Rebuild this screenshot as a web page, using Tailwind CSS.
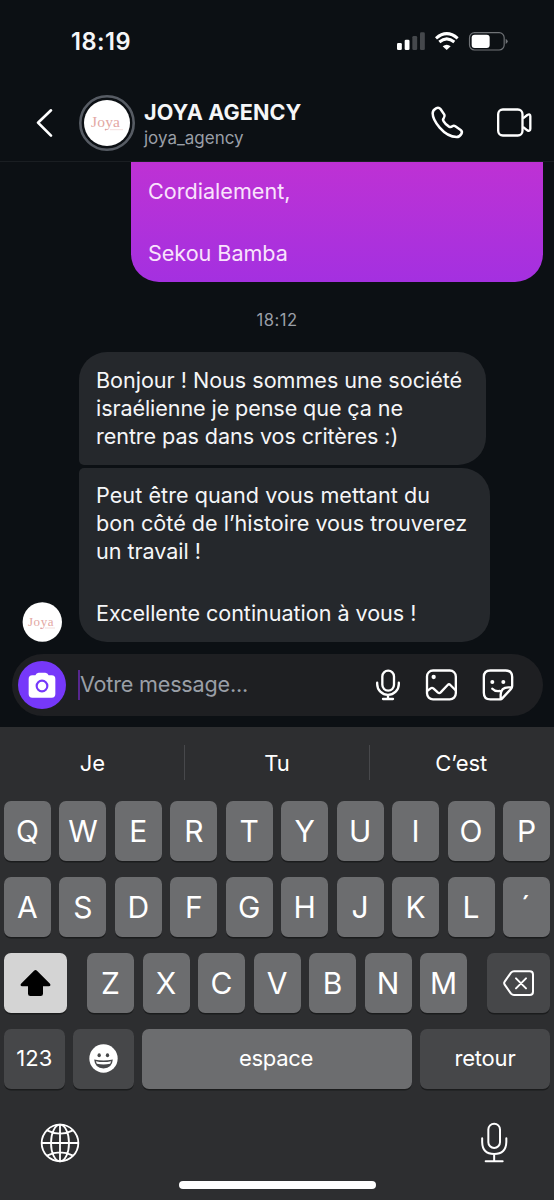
<!DOCTYPE html>
<html lang="fr">
<head>
<meta charset="utf-8">
<title>JOYA AGENCY</title>
<script src="https://cdn.jsdelivr.net/npm/@tailwindcss/browser@4"></script>
</head>
<body class="bg-[#0c1014]">
<div class="flex h-[1200px] w-[554px] flex-col overflow-hidden bg-[#0c1014] font-['Inter',sans-serif] text-[#f5f6f8]">

  <!-- Status bar -->
  <div class="flex h-[82px] shrink-0 items-center justify-between pl-[71px] pr-[43.7px]">
    <div class="pt-[2px] text-[23.6px] leading-7 font-semibold tracking-[0.5px] whitespace-nowrap">18:19</div>
    <svg class="h-[22px] w-[115px]" viewBox="355 90 345 66" fill="#fff">
      <rect x="361" y="129" width="14.500" height="21" rx="4"/><rect x="384" y="119" width="14.500" height="31" rx="4"/>
      <rect x="407" y="108" width="14.500" height="42" rx="4" fill="#45484c"/><rect x="430" y="97" width="14.500" height="53" rx="4" fill="#45484c"/>
      <path d="M478 115Q510 87 543 115" fill="none" stroke="#fff" stroke-width="9"/>
      <path d="M488 126Q510 107 533 126" fill="none" stroke="#fff" stroke-width="9"/>
      <path d="M498 139Q510 129 522 139L510 150Z"/>
      <rect x="578.500" y="98" width="104" height="52" rx="15" fill="none" stroke="#707377" stroke-width="3.500"/>
      <rect x="585" y="104" width="54" height="40" rx="9"/><path d="M687 116Q693 119 693 124Q693 129 687 132Z" fill="#707377"/>
    </svg>
  </div>

  <!-- Chat header -->
  <div class="flex h-[80px] shrink-0 items-center border-b border-[#1a1e22] pt-[2px] pl-[33px] pr-[20.500px]">
    <svg class="h-[34px] w-[22px]" viewBox="99 317 66 102" fill="none" stroke="#fff" stroke-width="8" stroke-linecap="round" stroke-linejoin="round"><path d="M153 330L114 367L153 406"/></svg>
    <svg class="ml-[24px] size-[56px]" viewBox="0 0 56 56">
      <circle cx="28" cy="28" r="26.700" fill="#0c1014" stroke="#575c64" stroke-width="2.600"/><circle cx="28" cy="28" r="23" fill="#fff"/>
      <text x="12" y="32" font-family="Liberation Serif, serif" font-size="15.500" textLength="29" fill="#e3a7a3">Joya</text>
      <path d="M31 34.700H44" stroke="#f3dfdd" stroke-width="1"/><circle cx="26.500" cy="34.700" r=".8" fill="#d99"/>
    </svg>
    <div class="ml-[9px] flex-1 pt-[4px] whitespace-nowrap">
      <div class="text-[21.6px] leading-[27px] font-bold tracking-[0.1px]">JOYA AGENCY</div>
      <div class="text-[17px] leading-[24px] text-[#9a9fa7]">joya_agency</div>
    </div>
    <svg class="size-[36.67px]" viewBox="455 312 110 110" fill="none" stroke="#fff" stroke-width="7.500" stroke-linejoin="round"><path d="M476 325C482 322 487 324 490 328L501 344C503 348 502 351 499 355C496 358 497 361 499 364C503 371 509 376 515 380C519 382 521 382 525 379C528 377 531 377 534 379L550 390C554 393 555 397 552 402C549 407 544 411 538 411C520 411 500 398 487 383C475 369 466 354 466 340C466 333 470 328 476 325Z"/></svg>
    <svg class="ml-[30px] h-[36.67px] w-[38.33px]" viewBox="655 312 115 110" fill="none" stroke="#fff" stroke-width="7" stroke-linejoin="round"><rect x="664.500" y="328.500" width="73" height="78" rx="14"/><path d="M739 355L752 345Q761 340 761 349V386Q761 395 752 391L739 381"/></svg>
  </div>

  <!-- Conversation -->
  <div class="flex h-[480px] shrink-0 flex-col text-[21.6px] leading-[28px] whitespace-nowrap">
    <div class="ml-[131px] h-[119.5px] w-[412px] rounded-b-[28px] bg-linear-to-b from-[#be31d4] to-[#a430e0] pt-[15px] pl-[17px] text-[#f9e3fc]">
      <p class="mb-[34px]">Cordialement,</p>
      <p class="tracking-[-0.05px]">Sekou Bamba</p>
    </div>
    <div class="mt-[27px] h-[22px] text-center text-[16.6px] leading-[22px] tracking-[0.5px] text-[#9a9fa7]">18:12</div>
    <div class="mt-[21.500px] ml-[79px] h-[112.500px] w-[407px] rounded-[28px] rounded-bl-[5px] bg-[#25282c] pt-[14px] pl-[17px]">
      <p class="tracking-[-0.03px]">Bonjour ! Nous sommes une société</p>
      <p class="tracking-[-0.1px]">israélienne je pense que ça ne</p>
      <p class="tracking-[-0.08px]">rentre pas dans vos critères :)</p>
    </div>
    <div class="mt-[3px] flex items-end">
      <svg class="ml-[22px] size-[40px]" viewBox="0 0 40 40">
        <circle cx="20.300" cy="20" r="19.700" fill="#fff"/>
        <text x="6" y="24" font-family="Liberation Serif, serif" font-size="13" textLength="25.500" fill="#e3a7a3">Joya</text>
        <path d="M23 26H33" stroke="#f3dfdd" stroke-width="1"/><circle cx="19" cy="26.300" r=".8" fill="#d99"/>
      </svg>
      <div class="ml-[17px] h-[174.500px] w-[411px] rounded-[28px] rounded-tl-[5px] bg-[#25282c] pt-[13px] pl-[17px]">
        <p class="tracking-[0.05px]">Peut être quand vous mettant du</p>
        <p>bon côté de l’histoire vous trouverez</p>
        <p class="mb-[34px] tracking-[-0.05px]">un travail !</p>
        <p class="tracking-[-0.05px]">Excellente continuation à vous !</p>
      </div>
    </div>
  </div>

  <!-- Composer -->
  <div class="mt-[12px] mb-[11px] ml-[12px] flex h-[61.500px] w-[531px] shrink-0 items-center rounded-full bg-[#1e1f22] pl-[6px]">
    <div class="flex size-[48px] items-center justify-center rounded-full bg-[#7638fa]">
      <svg class="h-[26px] w-[28px]" viewBox="85 241 84 78" fill="#fff"><path d="M98 251H107Q110 243 117 243H137Q144 243 147 251H156Q167 251 167 262V307Q167 318 156 318H98Q87 318 87 307V262Q87 251 98 251Z"/><circle cx="127" cy="283" r="16" fill="#fff" stroke="#7638fa" stroke-width="6.500"/></svg>
    </div>
    <div class="ml-[11.500px] h-[30px] w-[2.500px] bg-[#57278f]"></div>
    <div class="flex-1 pb-[2px] text-[21.6px] leading-[28px] tracking-[-0.2px] whitespace-nowrap text-[#9a9fa7]">Votre message...</div>
    <svg class="mr-[25.500px] h-[36px] w-[144px]" viewBox="101 80 432 108" fill="none" stroke="#fff" stroke-width="7" stroke-linecap="round" stroke-linejoin="round">
      <rect x="126" y="91" width="35" height="60" rx="17.500"/><path d="M110.500 127V131A32.500 32.500 0 0 0 175.500 131V127M143 164V176M128 176H158"/>
      <rect x="260" y="90.500" width="86.500" height="86.500" rx="18"/><path d="M262 151L271 144Q275 141 279 144L293 157Q297 160 301 156L322 134Q326 130 330 134L345 149"/><circle cx="280" cy="110" r="6.500" fill="#fff" stroke="none"/>
      <path d="M481 177H450Q430.500 177 430.500 157V110Q430.500 90.500 450 90.500H496Q515.500 90.500 515.500 110V137Q515.500 142 512 146L485 175Q483 177 481 177V163Q482 141 504 141H514M456 145Q464 154 478 152"/><circle cx="456" cy="125" r="6" fill="#fff" stroke="none"/><circle cx="489" cy="125" r="6" fill="#fff" stroke="none"/>
    </svg>
  </div>

  <!-- Keyboard -->
  <div class="flex h-[473.500px] shrink-0 flex-col bg-[#2d2e30] text-white">
    <div class="flex h-[74.500px] shrink-0 items-center pb-[2px] text-center text-[22px] leading-[28px]">
      <div class="w-[184px] pl-[1px]">Je</div><div class="h-[35px] w-px bg-[#47484b]"></div>
      <div class="w-[184px]">Tu</div><div class="h-[35px] w-px bg-[#47484b]"></div>
      <div class="flex-1 pr-[1.5px]">C’est</div>
    </div>
    <div class="flex flex-col gap-[16.500px] px-[4px] text-[30px] leading-[61.500px] font-normal">
      <div class="grid h-[59.500px] grid-cols-10 grid-rows-[59.5px] gap-[8.500px] text-center">
        <div class="rounded-[7px] bg-[#6c6d6f] shadow-[0_1.5px_0_#1b1c1d]">Q</div><div class="rounded-[7px] bg-[#6c6d6f] shadow-[0_1.5px_0_#1b1c1d]">W</div><div class="rounded-[7px] bg-[#6c6d6f] shadow-[0_1.5px_0_#1b1c1d]">E</div><div class="rounded-[7px] bg-[#6c6d6f] shadow-[0_1.5px_0_#1b1c1d]">R</div><div class="rounded-[7px] bg-[#6c6d6f] shadow-[0_1.5px_0_#1b1c1d]">T</div><div class="rounded-[7px] bg-[#6c6d6f] shadow-[0_1.5px_0_#1b1c1d]">Y</div><div class="rounded-[7px] bg-[#6c6d6f] shadow-[0_1.5px_0_#1b1c1d]">U</div><div class="rounded-[7px] bg-[#6c6d6f] shadow-[0_1.5px_0_#1b1c1d]">I</div><div class="rounded-[7px] bg-[#6c6d6f] shadow-[0_1.5px_0_#1b1c1d]">O</div><div class="rounded-[7px] bg-[#6c6d6f] shadow-[0_1.5px_0_#1b1c1d]">P</div>
      </div>
      <div class="grid h-[59.500px] grid-cols-10 grid-rows-[59.5px] gap-[8.500px] text-center">
        <div class="rounded-[7px] bg-[#6c6d6f] shadow-[0_1.5px_0_#1b1c1d]">A</div><div class="rounded-[7px] bg-[#6c6d6f] shadow-[0_1.5px_0_#1b1c1d]">S</div><div class="rounded-[7px] bg-[#6c6d6f] shadow-[0_1.5px_0_#1b1c1d]">D</div><div class="rounded-[7px] bg-[#6c6d6f] shadow-[0_1.5px_0_#1b1c1d]">F</div><div class="rounded-[7px] bg-[#6c6d6f] shadow-[0_1.5px_0_#1b1c1d]">G</div><div class="rounded-[7px] bg-[#6c6d6f] shadow-[0_1.5px_0_#1b1c1d]">H</div><div class="rounded-[7px] bg-[#6c6d6f] shadow-[0_1.5px_0_#1b1c1d]">J</div><div class="rounded-[7px] bg-[#6c6d6f] shadow-[0_1.5px_0_#1b1c1d]">K</div><div class="rounded-[7px] bg-[#6c6d6f] shadow-[0_1.5px_0_#1b1c1d]">L</div><div class="rounded-[7px] bg-[#6c6d6f] pr-[2px] shadow-[0_1.5px_0_#1b1c1d]">´</div>
      </div>
      <div class="flex h-[59.500px] justify-between text-center">
        <div class="flex w-[63px] items-center justify-center rounded-[7px] bg-[#d4d4d4] shadow-[0_1.5px_0_#1b1c1d]">
          <svg class="h-[28px] w-[32px]" viewBox="59 87 96 84" fill="#000"><path d="M101 92Q105.500 88 110 92L149 131Q153 138 145 139H128V161Q128 168 121 168H90Q83 168 83 161V139H66Q58 138 62 131Z"/></svg>
        </div>
        <div class="grid w-[380px] grid-cols-7 grid-rows-[59.5px] gap-[8.500px]">
          <div class="rounded-[7px] bg-[#6c6d6f] shadow-[0_1.5px_0_#1b1c1d]">Z</div><div class="rounded-[7px] bg-[#6c6d6f] shadow-[0_1.5px_0_#1b1c1d]">X</div><div class="rounded-[7px] bg-[#6c6d6f] shadow-[0_1.5px_0_#1b1c1d]">C</div><div class="rounded-[7px] bg-[#6c6d6f] shadow-[0_1.5px_0_#1b1c1d]">V</div><div class="rounded-[7px] bg-[#6c6d6f] shadow-[0_1.5px_0_#1b1c1d]">B</div><div class="rounded-[7px] bg-[#6c6d6f] shadow-[0_1.5px_0_#1b1c1d]">N</div><div class="rounded-[7px] bg-[#6c6d6f] shadow-[0_1.5px_0_#1b1c1d]">M</div>
        </div>
        <div class="flex w-[63px] items-center justify-center rounded-[7px] bg-[#464749] shadow-[0_1.5px_0_#1b1c1d]">
          <svg class="h-[28px] w-[34px]" viewBox="675 87 102 84" fill="none" stroke="#fff" stroke-width="6" stroke-linecap="round" stroke-linejoin="round"><path d="M711 93.500H758Q768 93.500 768 103.500V155Q768 165 758 165H711Q706 165 702 161L683 134Q680 129 683 125L702 98Q706 93.500 711 93.500ZM717 115L747 145M747 115L717 145"/></svg>
        </div>
      </div>
      <div class="flex h-[59.500px] text-center text-[22px] leading-[58px]">
        <div class="w-[60.500px] rounded-[7px] bg-[#464749] shadow-[0_1.5px_0_#1b1c1d]">123</div>
        <div class="ml-[8.500px] flex w-[61px] items-center justify-center rounded-[7px] bg-[#464749] shadow-[0_1.5px_0_#1b1c1d]">
          <svg class="size-[29px]" viewBox="265.500 313.500 87 87"><circle cx="309" cy="357" r="42.500" fill="#fff"/><ellipse cx="296" cy="347" rx="5" ry="6" fill="#464749"/><ellipse cx="321" cy="347" rx="5" ry="6" fill="#464749"/><path d="M281 360Q309 366 337 360Q335 386 309 387Q283 386 281 360Z" fill="#464749"/><path d="M286 365Q309 370 332 365L329 373Q309 377 289 373Z" fill="#fff"/></svg>
        </div>
        <div class="ml-[7.500px] w-[270px] rounded-[7px] bg-[#6c6d6f] pr-[1px] tracking-[-0.35px] shadow-[0_1.5px_0_#1b1c1d]">espace</div>
        <div class="ml-[8.500px] flex-1 rounded-[7px] bg-[#464749] tracking-[-0.2px] shadow-[0_1.5px_0_#1b1c1d]">retour</div>
      </div>
    </div>
    <div class="flex items-center justify-between pt-[32.500px] pr-[43.500px] pl-[40px]">
      <svg class="size-[40px]" viewBox="120 550 120 120" fill="none" stroke="#fff" stroke-width="5.500"><circle cx="180" cy="610" r="55"/><ellipse cx="180" cy="610" rx="27" ry="55"/><path d="M180 555V665M125 610H235M141 572Q180 592 219 572M141 648Q180 628 219 648"/></svg>
      <svg class="h-[44px] w-[34px]" viewBox="599 541 102 132" fill="none" stroke="#fff" stroke-width="6" stroke-linecap="round"><rect x="633" y="549" width="35" height="73" rx="17.500"/><path d="M614.500 593V604Q615 640 650.500 640Q686 640 687 604V593M650.500 641V661M625 661.500H676"/></svg>
    </div>
    <div class="mt-[16px] ml-[178.500px] h-[7.500px] w-[197.500px] rounded-full bg-white"></div>
  </div>
</div>
</body>
</html>
